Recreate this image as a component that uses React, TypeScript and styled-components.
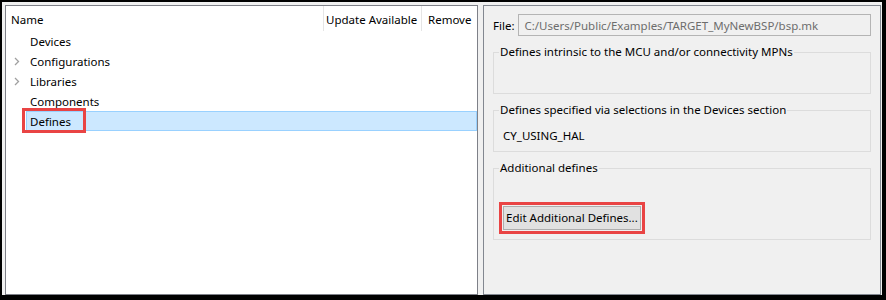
import styled, { createGlobalStyle } from "styled-components";

const GlobalStyle = createGlobalStyle`
  body {
    margin: 0;
    font-family: "Segoe UI", "Noto Sans", sans-serif;
    font-size: 11.5px;
    color: #000000;
  }
`;

const Frame = styled.div`
  width: 886px;
  height: 300px;
  box-sizing: border-box;
  border-style: solid;
  border-color: #000000;
  border-width: 2px 4px 5px 2px;
  background: #f0f0f0;
  padding: 3px 1px 0 3px;
  display: flex;
  gap: 5px;
`;

const TreePanel = styled.div`
  width: 473px;
  height: 290px;
  box-sizing: border-box;
  border: 1px solid #7e8088;
  background: #ffffff;
  display: flex;
  flex-direction: column;
`;

const Header = styled.div`
  display: grid;
  grid-template-columns: 318px 98px 1fr;
  height: 25px;
`;

const HeaderCell = styled.div<{ $pad: number; $last?: boolean }>`
  display: flex;
  align-items: center;
  padding: 1px 0 0 ${(p) => p.$pad}px;
  border-right: ${(p) => (p.$last ? "none" : "1px solid #e5e5e5")};
  white-space: nowrap;
`;

const TreeRow = styled.div`
  display: flex;
  align-items: stretch;
  height: 20px;
`;

const Expander = styled.div`
  width: 20px;
  padding-left: 8px;
  box-sizing: border-box;
  display: flex;
  align-items: center;
`;

const Label = styled.div<{ $selected?: boolean }>`
  position: relative;
  flex: 1;
  display: flex;
  align-items: center;
  padding: 0 3px;
  border: 1px solid ${(p) => (p.$selected ? "#99d1ff" : "transparent")};
  background: ${(p) => (p.$selected ? "#cce8ff" : "transparent")};
`;

const RedMark = styled.span`
  position: absolute;
  left: -5px;
  top: -4px;
  width: 64px;
  height: 25px;
  box-sizing: border-box;
  border: 3px solid #e94444;
`;

const DetailPanel = styled.div`
  width: 398px;
  height: 290px;
  box-sizing: border-box;
  border: 1px solid #828790;
  background: #f0f0f0;
  padding: 8px 9px 0 8px;
  display: flex;
  flex-direction: column;
  gap: 8px;
`;

const FileRow = styled.div`
  display: flex;
  align-items: center;
  gap: 4px;
  height: 22px;
  padding-left: 1px;
`;

const FileInput = styled.input`
  flex: 1;
  height: 22px;
  box-sizing: border-box;
  border: 1px solid #b4b4b4;
  background: #f0f0f0;
  color: #6d6d6d;
  font: inherit;
  padding: 0 5px;
  outline: none;
`;

const Group = styled.fieldset<{ $height: number }>`
  margin: 0 0 0 1px;
  padding: 0 5px;
  height: ${(p) => p.$height}px;
  box-sizing: border-box;
  border: 1px solid #dcdcdc;
  min-width: 0;
`;

const Legend = styled.legend`
  padding: 0 1px;
  line-height: 16px;
`;

const GroupBody = styled.div<{ $top: number }>`
  padding: ${(p) => p.$top}px 0 0 4px;
  line-height: 16px;
`;

const Button = styled.button`
  height: 24px;
  box-sizing: border-box;
  padding: 0 2px;
  background: #e1e1e1;
  border: 1px solid #adadad;
  font: inherit;
  color: #000000;
  outline: 3px solid #e94444;
  outline-offset: 1px;
`;

function Chevron() {
  return (
    <svg width="6" height="9" viewBox="0 0 6 9">
      <polyline
        points="1,1 4.5,4.5 1,8"
        fill="none"
        stroke="#a0a0a0"
        strokeWidth="1.3"
      />
    </svg>
  );
}

const items = [
  { name: "Devices", expandable: false },
  { name: "Configurations", expandable: true },
  { name: "Libraries", expandable: true },
  { name: "Components", expandable: false },
  { name: "Defines", expandable: false, selected: true },
];

export default function App() {
  return (
    <>
      <GlobalStyle />
      <Frame>
        <TreePanel>
          <Header>
            <HeaderCell $pad={5}>Name</HeaderCell>
            <HeaderCell $pad={2}>Update Available</HeaderCell>
            <HeaderCell $pad={6} $last>
              Remove
            </HeaderCell>
          </Header>
          {items.map((item) => (
            <TreeRow key={item.name}>
              <Expander>{item.expandable && <Chevron />}</Expander>
              <Label $selected={item.selected}>
                {item.name}
                {item.selected && <RedMark />}
              </Label>
            </TreeRow>
          ))}
        </TreePanel>

        <DetailPanel>
          <FileRow>
            <span>File:</span>
            <FileInput
              readOnly
              value="C:/Users/Public/Examples/TARGET_MyNewBSP/bsp.mk"
            />
          </FileRow>

          <Group $height={50}>
            <Legend>Defines intrinsic to the MCU and/or connectivity MPNs</Legend>
          </Group>

          <Group $height={50}>
            <Legend>Defines specified via selections in the Devices section</Legend>
            <GroupBody $top={10}>CY_USING_HAL</GroupBody>
          </Group>

          <Group $height={80}>
            <Legend>Additional defines</Legend>
            <GroupBody $top={30}>
              <Button>Edit Additional Defines...</Button>
            </GroupBody>
          </Group>
        </DetailPanel>
      </Frame>
    </>
  );
}
